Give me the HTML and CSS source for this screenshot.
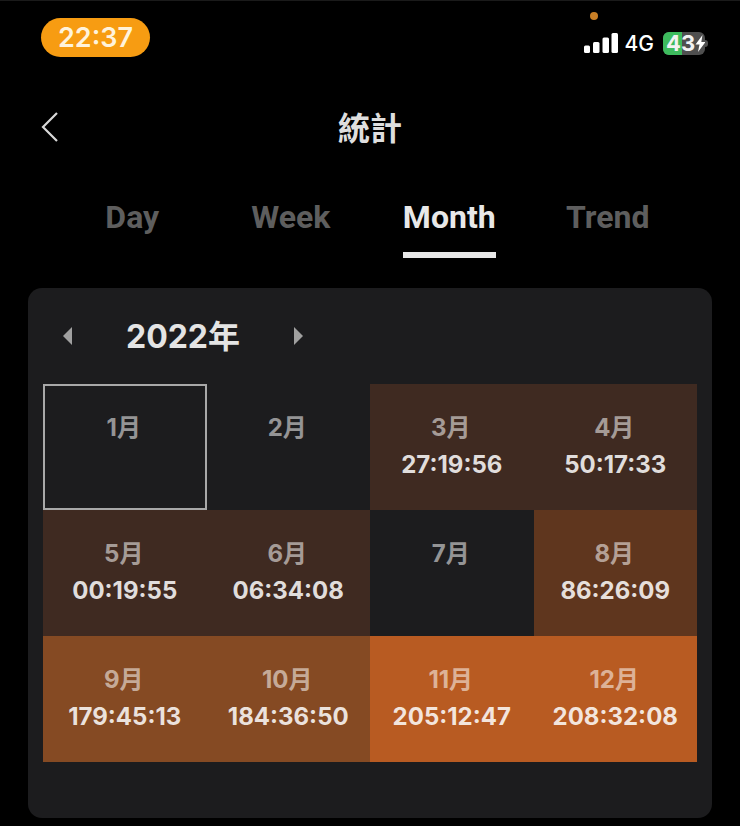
FILE: index.html
```html
<!DOCTYPE html>
<html lang="zh-Hant">
<head>
<meta charset="utf-8">
<title>統計</title>
<link rel="stylesheet" href="styles.css">
</head>
<body>
<div class="screen">
  <header class="status">
    <div class="clock">22:37</div>
    <span class="dot"></span>
    <div class="status-right">
      <svg class="signal" width="34" height="20" viewBox="0 0 34 20"><rect x="0" y="12.500" width="6" height="7.500" rx="1.500"/><rect x="9" y="9" width="6.500" height="11" rx="1.500"/><rect x="18.500" y="4.500" width="6.500" height="15.500" rx="1.500"/><rect x="27.500" y="0" width="6.500" height="20" rx="1.500"/></svg>
      <span class="net">4G</span>
      <div class="battery"><span class="battery-fill"></span><span class="battery-text">43</span><svg class="bolt" width="11" height="17" viewBox="0 0 11 17"><path d="M7.500 0 0.500 9.500H4.500L3 17 10.500 7H6.300Z"/></svg><span class="battery-cap"></span></div>
    </div>
  </header>
  <nav class="titlebar">
    <svg class="back" width="20" height="32" viewBox="0 0 20 32"><path d="M17 2 3 16 17 30"/></svg>
    <h1 class="title">統計</h1>
  </nav>
  <div class="tabs">
    <div class="tab">Day</div>
    <div class="tab">Week</div>
    <div class="tab active"><span class="tab-label">Month</span></div>
    <div class="tab">Trend</div>
  </div>
  <section class="card">
    <div class="year-row">
      <span class="arrow left"></span>
      <span class="year">2022年</span>
      <span class="arrow right"></span>
    </div>
    <div class="months">
      <div class="cell selected"><div class="m">1月</div></div>
      <div class="cell"><div class="m">2月</div></div>
      <div class="cell l1"><div class="m">3月</div><div class="t">27:19:56</div></div>
      <div class="cell l1"><div class="m">4月</div><div class="t">50:17:33</div></div>
      <div class="cell l1"><div class="m">5月</div><div class="t">00:19:55</div></div>
      <div class="cell l1"><div class="m">6月</div><div class="t">06:34:08</div></div>
      <div class="cell"><div class="m">7月</div></div>
      <div class="cell l2"><div class="m">8月</div><div class="t">86:26:09</div></div>
      <div class="cell l3"><div class="m">9月</div><div class="t">179:45:13</div></div>
      <div class="cell l3"><div class="m">10月</div><div class="t">184:36:50</div></div>
      <div class="cell l4"><div class="m">11月</div><div class="t">205:12:47</div></div>
      <div class="cell l4"><div class="m">12月</div><div class="t">208:32:08</div></div>
    </div>
  </section>
</div>
</body>
</html>
```
FILE: styles.css
```css
* { box-sizing: border-box; }
html, body { margin: 0; padding: 0; background: #000; }
body { font-family: Inter, "Noto Sans CJK TC", sans-serif; color: #e8e8e8; }
.screen { width: 740px; height: 826px; overflow: hidden; position: relative; border-top: 1px solid #1a1a1a; }

.status { height: 83px; padding: 17px 35px 0 41px; display: flex; justify-content: space-between; align-items: flex-start; }
.clock { width: 109px; height: 39px; border-radius: 20px; background: #f79c12; color: #fff3dc; font-size: 27px; font-weight: 600; line-height: 39px; text-align: center; }
.dot { position: absolute; left: 590px; top: 11px; width: 8px; height: 8px; border-radius: 50%; background: #c97f26; }
.status-right { display: flex; align-items: center; gap: 7px; margin-top: 13px; height: 24px; }
.signal { fill: #fff; display: block; }
.net { font-size: 21px; font-weight: 500; color: #fff; margin-right: 2px; }
.battery { position: relative; width: 42px; height: 23px; border-radius: 6px; background: #4f4f4f; display: flex; align-items: center; padding-left: 3px; }
.battery-fill { position: absolute; left: 0; top: 0; bottom: 0; width: 19px; background: #3dbb5d; border-radius: 6px 0 0 6px; }
.battery-text { position: relative; font-size: 22px; font-weight: 700; color: #f2f2f2; line-height: 23px; }
.bolt { position: relative; fill: #fff; flex: none; }
.battery-cap { position: absolute; right: -3px; top: 8px; width: 3px; height: 7px; background: #4f4f4f; border-radius: 0 3px 3px 0; }

.titlebar { height: 88px; display: flex; align-items: center; justify-content: center; position: relative; }
.back { position: absolute; left: 40px; top: 27px; fill: none; stroke: #d8d8d8; stroke-width: 2.200; }
.title { margin: 0 0 4px; font-size: 32px; font-weight: 700; font-family: "Noto Sans CJK TC", sans-serif; color: #dedede; line-height: 44px; }

.tabs { height: 116px; padding: 0 53px; display: flex; align-items: flex-start; }
.tab { flex: 1; text-align: center; font-family: Roboto, sans-serif; font-size: 32px; font-weight: 700; color: #5e5e5e; line-height: 44px; padding-top: 23px; }
.tab.active { color: #e8e8e8; }
.tab-label { display: inline-block; height: 63px; border-bottom: 6px solid #e8e8e8; }

.card { margin: 0 28px; height: 530px; background: #1c1c1e; border-radius: 14px; padding: 0 15px; }
.year-row { height: 96px; display: flex; align-items: center; padding-left: 20px; }
.arrow { width: 0; height: 0; border-top: 9px solid transparent; border-bottom: 9px solid transparent; }
.arrow.left { border-right: 9px solid #a0a0a0; }
.arrow.right { border-left: 9px solid #a0a0a0; }
.year { width: 222px; text-align: center; font-size: 32px; font-weight: 700; color: #e4e4e4; line-height: 44px; margin-top: 2px; }

.months { display: grid; grid-template-columns: repeat(4, 163.500px); grid-auto-rows: 126px; }
.cell { padding-top: 26px; text-align: center; color: #fff; }
.m { font-size: 24px; font-weight: 700; line-height: 36px; color: rgba(255,255,255,.55); padding-right: 2px; }
.t { font-size: 24px; font-weight: 700; line-height: 38px; color: rgba(255,255,255,.85); }
.selected { border: 2px solid #a8a8a8; padding-top: 24px; }
.l1 { background: #3f2a21; }
.l2 { background: #5f361e; }
.l3 { background: #854a23; }
.l4 { background: #b85b22; }
```
